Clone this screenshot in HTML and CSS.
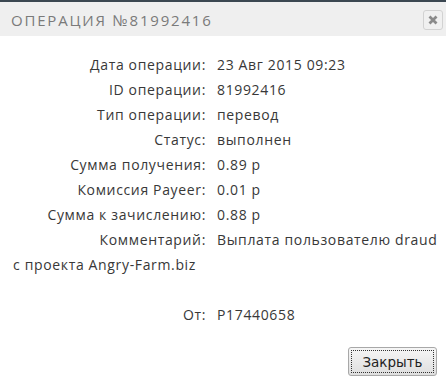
FILE: index.html
```html
<!DOCTYPE html>
<html lang="ru">
<head>
<meta charset="utf-8">
<link rel="stylesheet" href="styles.css">
</head>
<body>
<div class="dialog">
  <div class="topbar"></div>
  <div class="header">
    <div class="title">ОПЕРАЦИЯ №81992416</div>
    <button class="close" aria-label="close">
      <svg width="10" height="10" viewBox="0 0 10 10"><path d="M1.5 1.5 L8.5 8.5 M8.5 1.5 L1.5 8.5" stroke="#8a8a8a" stroke-width="2.8" stroke-linecap="butt"/></svg>
    </button>
  </div>
  <div class="content">
    <div class="grid">
      <div class="label">Дата операции:</div><div class="value">23 Авг 2015 09:23</div>
      <div class="label">ID операции:</div><div class="value">81992416</div>
      <div class="label">Тип операции:</div><div class="value">перевод</div>
      <div class="label">Статус:</div><div class="value">выполнен</div>
      <div class="label">Сумма получения:</div><div class="value">0.89 р</div>
      <div class="label">Комиссия Payeer:</div><div class="value">0.01 р</div>
      <div class="label">Сумма к зачислению:</div><div class="value">0.88 р</div>
      <div class="label">Комментарий:</div><div class="value">Выплата пользователю draud</div>
      <div class="full">с проекта Angry-Farm.biz</div>
      <div class="full empty"></div>
      <div class="label">От:</div><div class="value">P17440658</div>
    </div>
  </div>
  <div class="footer">
    <button class="btn"><span class="focus">Закрыть</span></button>
  </div>
</div>
</body>
</html>
```
FILE: styles.css
```css
html, body {
  margin: 0;
  padding: 0;
  background: #fff;
}
.dialog {
  width: 446px;
  height: 386px;
  display: flex;
  flex-direction: column;
  font-family: "Open Sans", sans-serif;
  color: #383838;
}
.topbar {
  height: 2px;
  background: #3b4751;
}
.header {
  height: 34px;
  background: #efefef;
  display: flex;
  align-items: center;
  justify-content: space-between;
  padding: 0 3px 0 11px;
}
.title {
  font-family: "Open Sans", sans-serif;
  font-size: 15px;
  letter-spacing: 1.8px;
  color: #7a7a7a;
  padding-top: 1px;
}
.close {
  width: 20px;
  height: 20px;
  padding: 0;
  border: 1px solid #d2d2d2;
  border-radius: 3px;
  background: #f0f0f0;
  display: flex;
  align-items: center;
  justify-content: center;
  margin-top: 1px;
}
.close svg {
  display: block;
}
.content {
  padding-top: 16px;
}
.grid {
  display: grid;
  grid-template-columns: 206px 1fr;
  column-gap: 11px;
  font-size: 14px;
  letter-spacing: 0.65px;
  line-height: 25px;
}
.label {
  text-align: right;
}
.full {
  grid-column: 1 / 3;
  padding-left: 13px;
  height: 25px;
}
.footer {
  display: flex;
  justify-content: flex-end;
  padding: 20px 9px 0 0;
}
.btn {
  width: 89px;
  height: 29px;
  padding: 2px;
  border: 1px solid #a8a8a8;
  border-radius: 3px;
  background: linear-gradient(#f6f6f6, #dedede);
  font-family: "DejaVu Sans", sans-serif;
  font-size: 13.5px;
  color: #222;
}
.focus {
  display: flex;
  align-items: center;
  justify-content: center;
  height: 100%;
  border: 1px dotted #333;
  box-sizing: border-box;
}
```
